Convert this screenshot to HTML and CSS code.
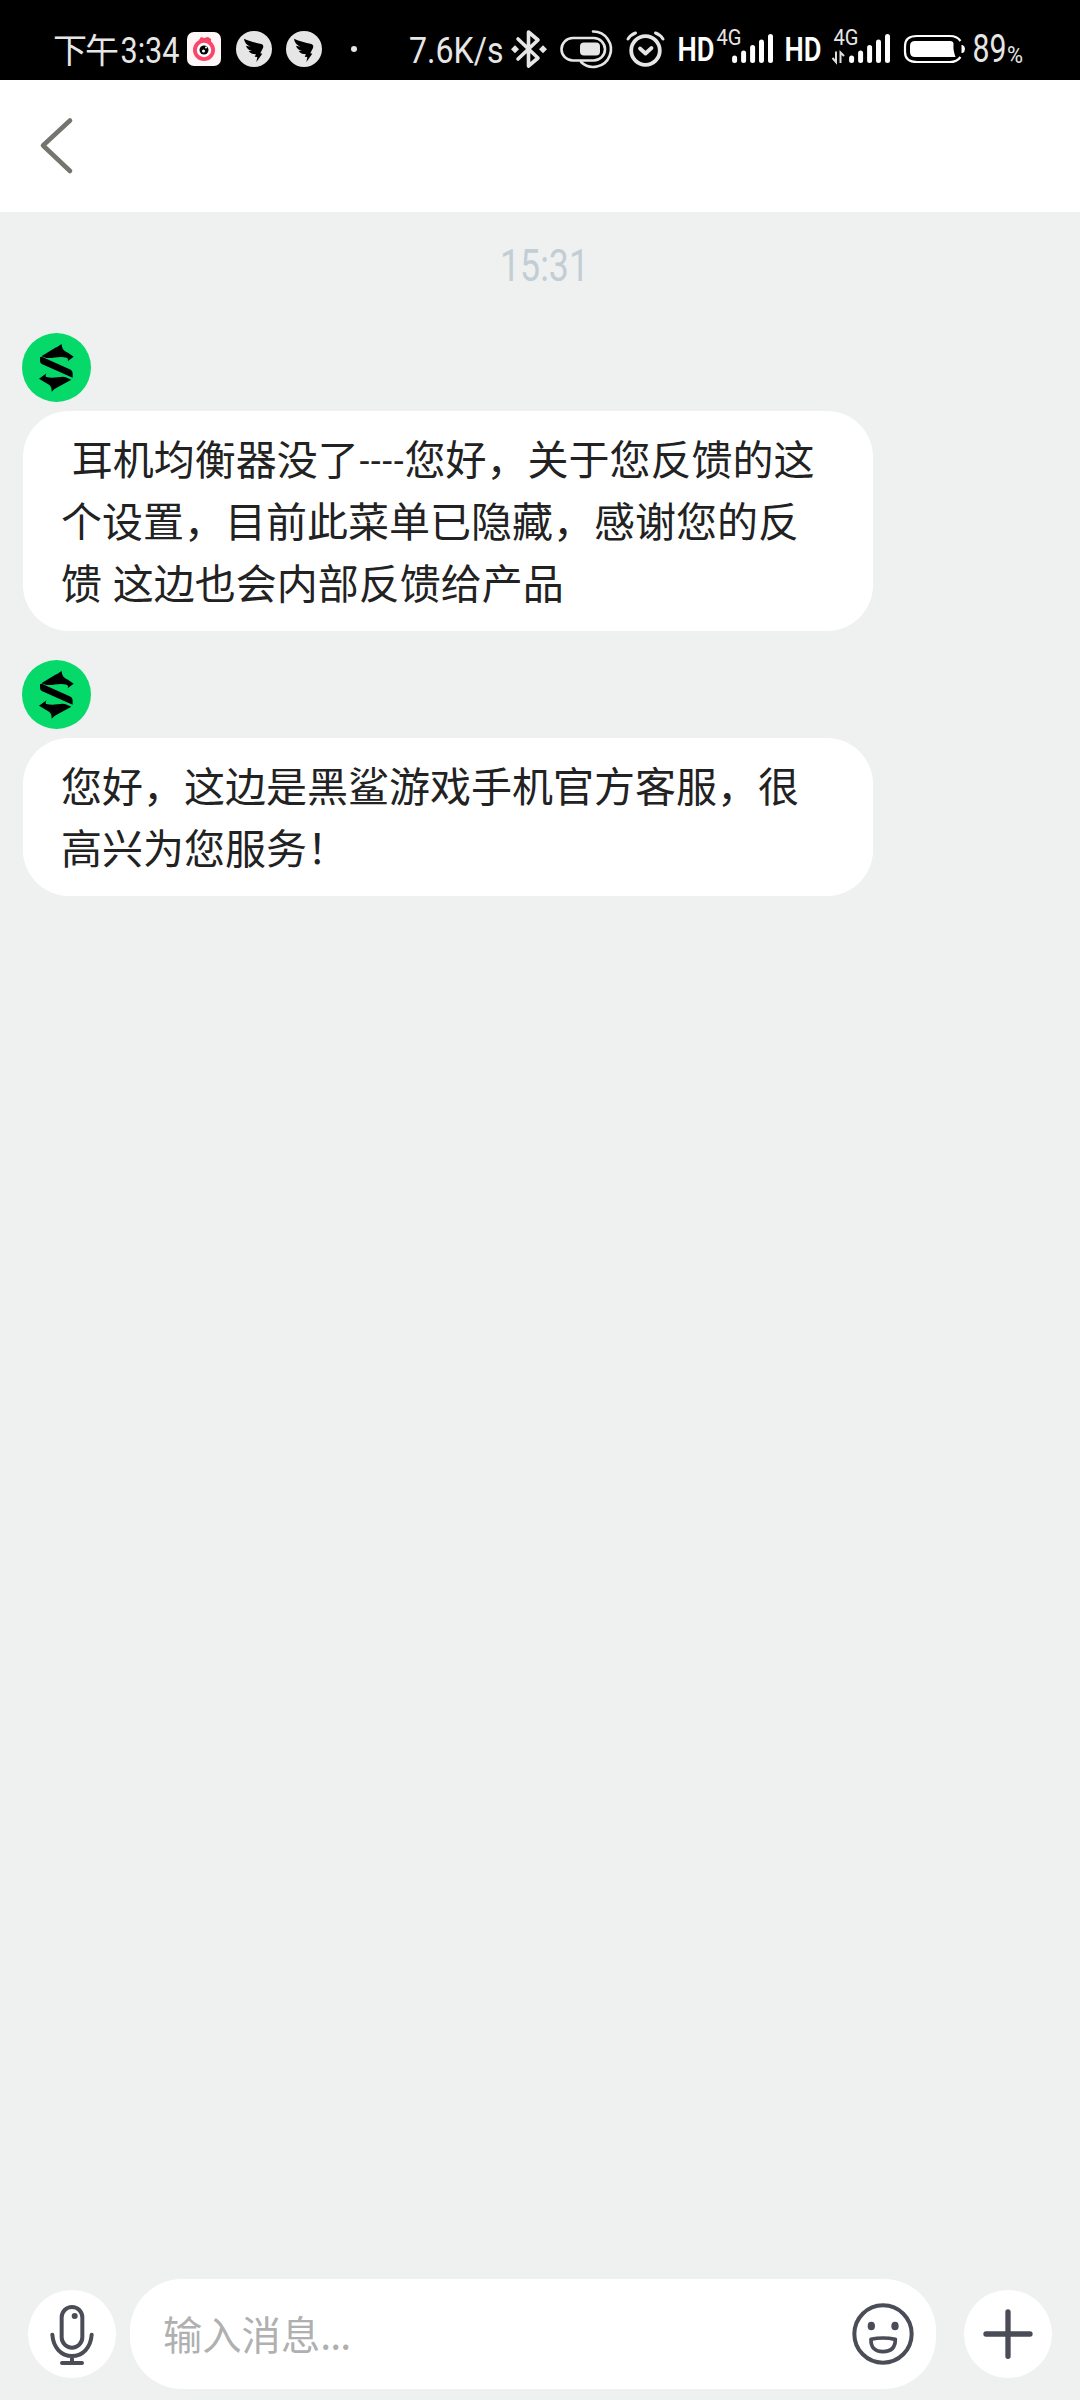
FILE: index.html
```html
<!DOCTYPE html>
<html lang="zh-CN">
<head>
<meta charset="utf-8">
<title>客服</title>
<link rel="stylesheet" href="styles.css">
</head>
<body>
<svg class="defs" aria-hidden="true">
  <symbol id="wing" viewBox="0 0 108 108">
    <circle cx="54" cy="54" r="54" fill="#e6e6e6"/>
    <path d="M24 23C40 31 58 34 76 39C82 41 83 46 81 51L73 67L79 68L61 93L64 78L56 77L60 70C49 70 42 66 38 60L48 60C38 57 32 51 30 44L43 47C32 41 25 34 24 23Z" fill="#000"/>
  </symbol>
  <symbol id="shark" viewBox="66 60 207 207">
    <circle cx="169.500" cy="163.500" r="103.500" fill="#04d96a"/>
    <path d="M124 130L166 104Q181 97 184 92L187 104Q190 113 204 119L221 131L203 145Q206 137 200 134C176 128 152 139 137 134ZM120 132H127L209 169Q218 173 218 182V194L127 154Q120 151 120 144ZM117 197L140 181Q134 190 139 192C164 199 184 187 197 193L214 200L174 222Q159 229 155 236Q156 221 147 215Z"/>
  </symbol>
</svg>

<header class="status">
  <svg class="st-time" viewBox="50 0 134 80"><text x="53" y="62.500" font-size="34" textLength="66">下午</text><text x="120.500" y="62.500" font-size="37.500" textLength="59" lengthAdjust="spacingAndGlyphs">3:34</text></svg>
  <svg class="st-app" viewBox="187 0 34 80"><rect x="187" y="32" width="34" height="34" rx="7" fill="#fff7f7"/><path d="M199 40L201 37L204 38L208 37L211 39V42Z" fill="#f8415a"/><circle cx="204" cy="50" r="11" fill="#f9466a"/><circle cx="204" cy="50" r="7.200" fill="#fff"/><circle cx="204" cy="50" r="4.500" fill="#000"/><circle cx="203.500" cy="51" r="1.500" fill="#fff"/><circle cx="206" cy="47.500" r="1" fill="#fff"/></svg>
  <svg class="st-wing"><use href="#wing"/></svg>
  <svg class="st-wing"><use href="#wing"/></svg>
  <i class="st-dot"></i>
  <svg class="st-speed" viewBox="408 0 98 80"><text x="409" y="62.500" font-size="37.500" textLength="94.500" lengthAdjust="spacingAndGlyphs">7.6K/s</text></svg>
  <svg class="st-bt" viewBox="510 0 38 80"><path d="M518 39L538 58L528.500 66V32L538 40L518 59" fill="none" stroke="#e6e6e6" stroke-width="3.600" stroke-linejoin="round" stroke-linecap="round"/><path d="M511 49.200l4-4 4 4-4 4ZM539 49.200l4-4 4 4-4 4Z" fill="#e6e6e6"/></svg>
  <svg class="st-toggle" viewBox="559 0 55 80"><g fill="none" stroke="#e6e6e6" stroke-width="2.600"><rect x="561.500" y="38" width="43.500" height="22.500" rx="11.250"/><path d="M593 31.500A17.700 17.700 0 1 1 581 62" stroke-linecap="round"/></g><rect x="580" y="42.500" width="20" height="13" rx="4" fill="#e6e6e6"/></svg>
  <svg class="st-alarm" viewBox="625 0 41 80"><g fill="none" stroke="#e6e6e6" stroke-width="3.800" stroke-linecap="round"><circle cx="645.500" cy="50.500" r="14.300"/><path d="M640 48.500L645.500 53.500L651.500 48" stroke-linejoin="round"/><path d="M628 39Q631 34.500 635.500 33M663 39Q660 34.500 655.500 33" stroke-width="3"/></g></svg>
  <svg class="st-hd" viewBox="678 0 37 80"><text class="bold" x="677.500" y="61" font-size="33" textLength="37" lengthAdjust="spacingAndGlyphs">HD</text></svg>
  <svg class="st-signal" viewBox="716 0 58 80"><text x="716.500" y="45" font-size="21.500" textLength="25" lengthAdjust="spacingAndGlyphs">4G</text><path d="M734.600 58V60.500M743.600 53V60.500M752.600 47.500V60.500M761.500 42V60.500M770.500 36.500V60.500" class="bars"/></svg>
  <svg class="st-hd2" viewBox="785 0 37 80"><text class="bold" x="784.500" y="61" font-size="33" textLength="37" lengthAdjust="spacingAndGlyphs">HD</text></svg>
  <svg class="st-signal2" viewBox="831 0 60 80"><text x="833.500" y="45" font-size="21.500" textLength="25" lengthAdjust="spacingAndGlyphs">4G</text><path d="M836 51.500V62L832.500 58M840.500 63V52.500L844 56" fill="none" stroke="#ddd" stroke-width="2"/><path d="M851.600 58V60.500M860.600 53V60.500M869.600 47.500V60.500M878.500 42V60.500M887.500 36.500V60.500" class="bars"/></svg>
  <svg class="st-battery" viewBox="903 0 63 80"><path d="M960.500 41Q957 36 950 36H917Q905 36 905 46V52Q905 62 917 62H950Q957 62 960.500 57" fill="none" stroke="#fff" stroke-width="2.200"/><path d="M915 41H950Q954 41 953.500 45Q953 50 955.500 57H915Q910 57 910 52V46Q910 41 915 41Z" fill="#fff"/><path d="M961.500 45H962.500Q965 46 965 49T962.500 53H961.500Z" fill="#fff"/></svg>
  <svg class="st-pct" viewBox="973 0 52 80"><text x="972.500" y="62" font-size="39" textLength="34" lengthAdjust="spacingAndGlyphs">89</text><text x="1007" y="62.500" font-size="23" textLength="16" lengthAdjust="spacingAndGlyphs">%</text></svg>
</header>

<nav class="nav">
  <svg class="back" viewBox="39 116 35 60"><path d="M70 120.500L43 145.500L70 171" fill="none" stroke="#75746f" stroke-width="4.600" stroke-linecap="round" stroke-linejoin="round"/></svg>
</nav>

<main class="chat">
  <svg class="stamp" viewBox="500 0 90 44"><text x="500" y="36" font-size="44.500" textLength="89" lengthAdjust="spacingAndGlyphs">15:31</text></svg>
  <section class="message">
    <svg class="avatar"><use href="#shark"/></svg>
    <p class="bubble"> 耳机均衡器没了<span class="dashes">----</span>您好，关于您反馈的这个设置，目前此菜单已隐藏，感谢您的反馈 这边也会内部反馈给产品</p>
  </section>
  <section class="message">
    <svg class="avatar"><use href="#shark"/></svg>
    <p class="bubble">您好，这边是黑鲨游戏手机官方客服，很高兴为您服务！</p>
  </section>
</main>

<footer class="composer">
  <div class="round"><svg class="glyph" viewBox="0 0 264 264"><g fill="none" stroke="#4a4c57" stroke-width="12" stroke-linecap="round"><rect x="101" y="51" width="62" height="122" rx="31"/><path d="M73 134C76 174 100 198 132 198S188 174 191 134M132 198V218M102 219H162"/></g><circle cx="140" cy="78" r="9" fill="#4a4c57"/></svg></div>
  <div class="field">
    <span class="hint">输入消息<span class="dots">...</span></span>
    <svg class="smile" viewBox="0 0 186 186"><circle cx="93" cy="93" r="86" fill="none" stroke="#4a4c57" stroke-width="12"/><ellipse cx="58" cy="69" rx="11" ry="13" fill="#4a4c57"/><ellipse cx="129" cy="69" rx="11" ry="13" fill="#4a4c57"/><path d="M57 109Q93 101 130 109Q130 146 93 146T57 109Z" fill="none" stroke="#4a4c57" stroke-width="11" stroke-linejoin="round"/></svg>
  </div>
  <div class="round"><svg class="glyph" viewBox="0 0 264 264"><path d="M132 66V199M66 132H198" stroke="#4a4c57" stroke-width="16" stroke-linecap="round"/></svg></div>
</footer>
</body>
</html>
```
FILE: styles.css
```css
* { box-sizing: border-box; }
body {
  margin: 0;
  width: 1080px;
  height: 2400px;
  display: flex;
  flex-direction: column;
  background: #eff1f1;
  font-family: "Noto Sans CJK SC", sans-serif;
  color: #222;
}
svg { display: block; flex: none; overflow: visible; }
.defs { width: 0; height: 0; position: absolute; }

.status {
  height: 80px;
  flex: none;
  display: flex;
  align-items: center;
  background: #000;
  padding-left: 50px;
}
.status svg { height: 80px; }
.status text {
  font-family: Roboto, "Noto Sans CJK SC", sans-serif;
  font-weight: 400;
  fill: #e6e6e6;
}
.status .bold { font-weight: 600; fill: #fff; }
.bars { fill: none; stroke: #fff; stroke-width: 5; stroke-linecap: round; }
.st-time { width: 134px; }
.st-app { width: 34px; margin-left: 3px; }
.status .st-wing { width: 36px; height: 36px; margin: 18px 0 0 15px; }
.status .st-wing + .st-wing { margin-left: 14px; }
.st-dot { width: 6px; height: 6px; border-radius: 50%; background: #e6e6e6; margin: 18px 0 0 29px; }
.st-speed { width: 98px; margin-left: 51px; }
.st-bt { width: 38px; margin-left: 4px; }
.st-toggle { width: 55px; margin-left: 11px; }
.st-alarm { width: 41px; margin-left: 11px; }
.st-hd { width: 37px; margin-left: 12px; }
.st-signal { width: 58px; margin-left: 1px; }
.st-hd2 { width: 37px; margin-left: 11px; }
.st-signal2 { width: 60px; margin-left: 9px; }
.st-battery { width: 63px; margin-left: 12px; }
.st-pct { width: 52px; margin-left: 7px; }

.nav {
  height: 132px;
  flex: none;
  background: #fff;
  display: flex;
  align-items: center;
  padding-left: 39px;
}
.back { width: 35px; height: 60px; }

.chat { flex: 1; padding: 33px 0 0 22px; }
.stamp { width: 90px; height: 44px; margin: 0 0 44px 478px; }
.stamp text { font-family: Roboto, sans-serif; font-weight: 400; fill: #c3cdd4; }
.message { margin-bottom: 29px; }
.avatar { width: 69px; height: 69px; }
.bubble {
  width: 850px;
  margin: 9px 0 0 1px;
  padding: 15px 38px 19px;
  border-radius: 46px;
  background: #fff;
  font-size: 41px;
  line-height: 62px;
  word-spacing: 1.5px;
  white-space: pre-wrap;
}
.dashes { font-size: 32px; font-weight: 500; line-height: 1; vertical-align: 3px; }

.composer {
  height: 121px;
  flex: none;
  display: flex;
  align-items: center;
  padding: 0 28px 11px;
}
.round { width: 88px; height: 88px; border-radius: 50%; background: #fff; flex: none; }
.glyph { width: 88px; height: 88px; }
.field {
  width: 806px;
  height: 110px;
  margin: 0 28px 0 14px;
  padding: 0 22px 0 33px;
  border-radius: 52px;
  background: #fff;
  display: flex;
  align-items: center;
  justify-content: space-between;
}
.hint { font-size: 39.3px; line-height: 60px; padding-bottom: 3px; color: #b0b0b0; }
.dots { letter-spacing: -0.9px; }
.smile { width: 62px; height: 62px; }
```
